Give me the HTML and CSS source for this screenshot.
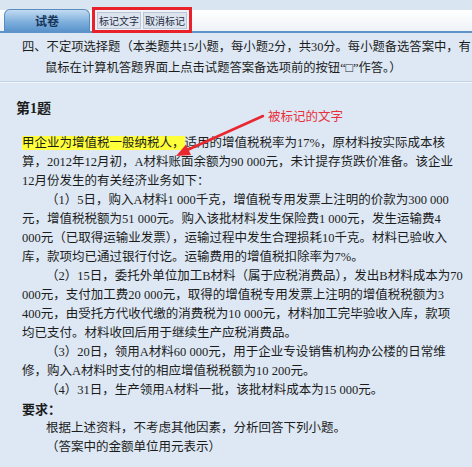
FILE: index.html
```html
<!DOCTYPE html>
<html lang="zh-CN">
<head>
    <meta charset="UTF-8">
    <title>试卷</title>
    <link rel="stylesheet" href="styles.css">
</head>
<body>
<div class="page">
    <div class="tabbar">
        <div class="tab">试卷</div>
        <div class="mark-tools">
            <button class="mark-btn">标记文字</button>
            <button class="mark-btn">取消标记</button>
        </div>
    </div>

    <div class="intro">
        <div class="intro-line">四、不定项选择题（本类题共15小题，每小题2分，共30分。每小题备选答案中，有</div>
        <div class="intro-line indent">鼠标在计算机答题界面上点击试题答案备选项前的按钮“□”作答。）</div>
    </div>

    <div class="question">
        <h3 class="q-title">第1题</h3>
        <div class="stem">
            <div class="ln"><span class="marked">甲企业为增值税一般纳税人，</span>适用的增值税税率为17%，原材料按实际成本核</div>
            <div class="ln">算，2012年12月初，A材料账面余额为90 000元，未计提存货跌价准备。该企业</div>
            <div class="ln">12月份发生的有关经济业务如下：</div>
            <div class="ln indent">（1）5日，购入A材料1 000千克，增值税专用发票上注明的价款为300 000</div>
            <div class="ln">元，增值税税额为51 000元。购入该批材料发生保险费1 000元，发生运输费4</div>
            <div class="ln">000元（已取得运输业发票），运输过程中发生合理损耗10千克。材料已验收入</div>
            <div class="ln">库，款项均已通过银行付讫。运输费用的增值税扣除率为7%。</div>
            <div class="ln indent">（2）15日，委托外单位加工B材料（属于应税消费品），发出B材料成本为70</div>
            <div class="ln">000元，支付加工费20 000元，取得的增值税专用发票上注明的增值税税额为3</div>
            <div class="ln">400元，由受托方代收代缴的消费税为10 000元，材料加工完毕验收入库，款项</div>
            <div class="ln">均已支付。材料收回后用于继续生产应税消费品。</div>
            <div class="ln indent">（3）20日，领用A材料60 000元，用于企业专设销售机构办公楼的日常维</div>
            <div class="ln">修，购入A材料时支付的相应增值税税额为10 200元。</div>
            <div class="ln indent">（4）31日，生产领用A材料一批，该批材料成本为15 000元。</div>
            <div class="ln req">要求：</div>
            <div class="ln indent">根据上述资料，不考虑其他因素，分析回答下列小题。</div>
            <div class="ln indent">（答案中的金额单位用元表示）</div>
        </div>

        <!-- 标注：箭头 + 说明 -->
        <svg class="callout-arrow" width="100" height="60" viewBox="0 0 100 60">
            <line x1="96" y1="17" x2="18" y2="52" stroke="#e8272f" stroke-width="2.5" stroke-linecap="round"/>
            <polygon points="9,57 19,45.5 24,56" fill="#e8272f"/>
        </svg>
        <span class="callout-text">被标记的文字</span>
    </div>
</div>
</body>
</html>
```

FILE: styles.css
```css
body {
    margin: 0;
    background: #dde8f4;
    font-family: "Liberation Serif", "Noto Sans CJK SC", serif;
    font-size: 13px;
    color: #1c1c1c;
    overflow: hidden;
}

.page {
    width: 472px;
    height: 467px;
    overflow: hidden;
}

.tabbar {
    display: flex;
    align-items: flex-end;
    height: 33px;
    padding-top: 10px;
    box-sizing: border-box;
    background: linear-gradient(to bottom, #d9e5f1 0, #d9e5f1 10px, #ffffff 10px, #eef2f7 100%);
    border-bottom: 2px solid #5e92c8;
}

.tab {
    margin-left: 4px;
    width: 86px;
    height: 22px;
    box-sizing: border-box;
    border: 1px solid #5a8cc0;
    border-bottom: none;
    border-radius: 6px 6px 0 0;
    background: linear-gradient(to bottom, #c2dbf2, #80b0dc 55%, #5b95cd);
    color: #18355a;
    font-family: "Noto Sans CJK SC", sans-serif;
    font-weight: bold;
    font-size: 12px;
    line-height: 21px;
    text-align: center;
}

.mark-tools {
    display: flex;
    align-items: center;
    gap: 2px;
    margin-left: 2px;
    margin-bottom: -2px;
    width: 100px;
    height: 26px;
    padding: 0 2px;
    box-sizing: border-box;
    border: 3px solid #e8212b;
    background: #eef2f8;
}

.mark-btn {
    width: 44px;
    height: 17px;
    padding: 0;
    border: 1px solid #b9c6d6;
    background: #dde4ee;
    color: #1c2c44;
    font-family: "Noto Sans CJK SC", sans-serif;
    font-size: 10px;
    line-height: 15px;
    text-align: center;
}

.intro {
    padding: 4px 0 2px 22px;
    font-size: 12.3px;
    line-height: 21px;
    white-space: nowrap;
    border-bottom: 1px solid #c3d3e6;
    box-shadow: 0 1px 0 #f2f6fb;
}

.intro-line.indent {
    padding-left: 23px;
}

.question {
    position: relative;
    padding: 0 0 0 22px;
}

.q-title {
    margin: 17px 0 0 -6px;
    font-family: "Liberation Serif", "Noto Sans CJK SC", serif;
    font-size: 14px;
    font-weight: bold;
    line-height: 20px;
}

.stem {
    margin-top: 15px;
    font-size: 12.5px;
    line-height: 19px;
    white-space: nowrap;
}

.ln.indent {
    padding-left: 24px;
}

.ln.req {
    font-weight: bold;
    font-size: 13px;
}

.marked {
    background: #ffff3a;
}

.callout-arrow {
    position: absolute;
    left: 167px;
    top: 0;
    overflow: visible;
}

.callout-text {
    position: absolute;
    left: 268px;
    top: 7px;
    color: #e8303a;
    font-family: "Noto Sans CJK SC", sans-serif;
    font-size: 12.5px;
}
```
